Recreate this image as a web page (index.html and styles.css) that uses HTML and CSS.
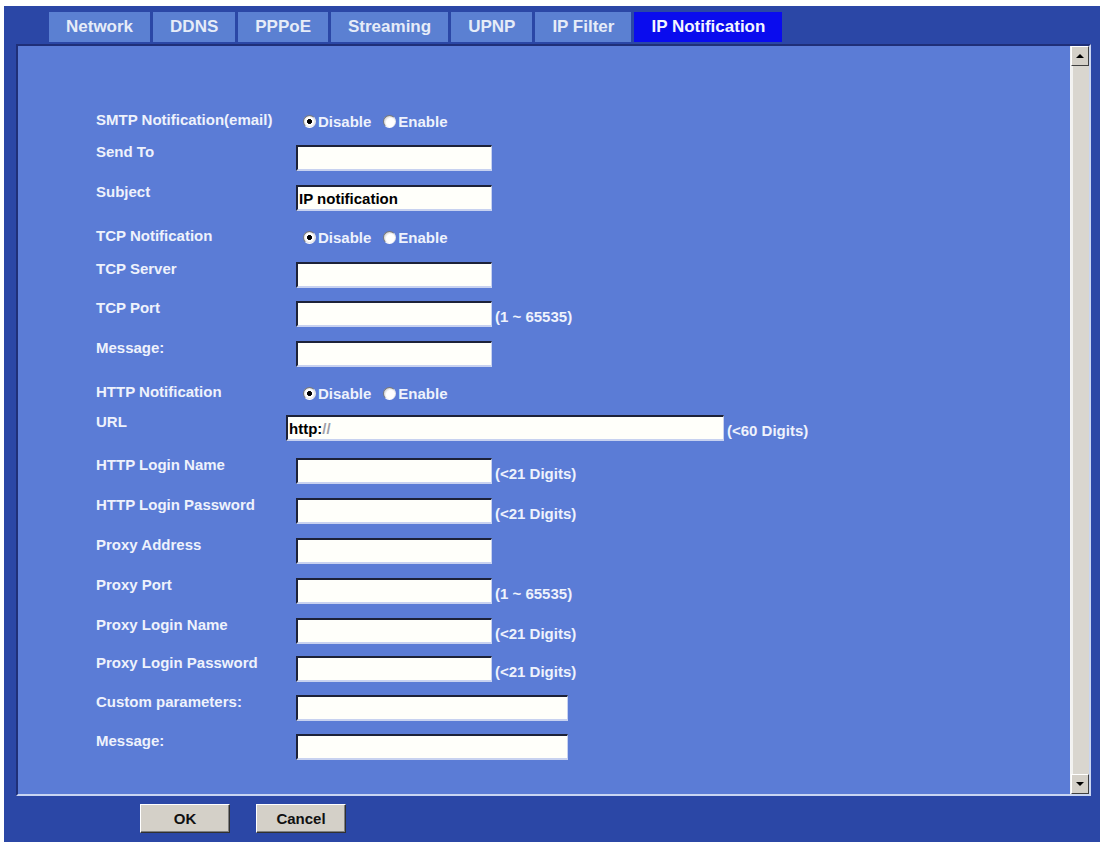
FILE: index.html
```html
<!DOCTYPE html>
<html>
<head>
<meta charset="utf-8">
<title>IP Notification</title>
<link rel="stylesheet" href="styles.css">
</head>
<body>
<div class="frame">
  <div class="tabs">
    <div class="tab">Network</div>
    <div class="tab">DDNS</div>
    <div class="tab">PPPoE</div>
    <div class="tab">Streaming</div>
    <div class="tab">UPNP</div>
    <div class="tab">IP Filter</div>
    <div class="tab active">IP Notification</div>
  </div>
  <div class="panel">
    <div class="content">
      <div class="form">
        <div class="row radio-row">
          <div class="label">SMTP Notification(email)</div>
          <div class="radios"><span class="radio checked"></span><span class="rtext">Disable</span><span class="radio"></span><span class="rtext">Enable</span></div>
        </div>
        <div class="row"><div class="label">Send To</div><input class="field" type="text"></div>
        <div class="row"><div class="label">Subject</div><input class="field" type="text" value="IP notification"></div>
        <div class="row radio-row">
          <div class="label">TCP Notification</div>
          <div class="radios"><span class="radio checked"></span><span class="rtext">Disable</span><span class="radio"></span><span class="rtext">Enable</span></div>
        </div>
        <div class="row"><div class="label">TCP Server</div><input class="field" type="text"></div>
        <div class="row"><div class="label">TCP Port</div><input class="field" type="text"><span class="hint">(1 ~ 65535)</span></div>
        <div class="row"><div class="label">Message:</div><input class="field" type="text"></div>
        <div class="row radio-row">
          <div class="label">HTTP Notification</div>
          <div class="radios"><span class="radio checked"></span><span class="rtext">Disable</span><span class="radio"></span><span class="rtext">Enable</span></div>
        </div>
        <div class="row"><div class="label">URL</div><div class="field url"><span>http:</span><span class="slash">//</span></div><span class="hint">(&lt;60 Digits)</span></div>
        <div class="row"><div class="label">HTTP Login Name</div><input class="field" type="text"><span class="hint">(&lt;21 Digits)</span></div>
        <div class="row"><div class="label">HTTP Login Password</div><input class="field" type="password"><span class="hint">(&lt;21 Digits)</span></div>
        <div class="row"><div class="label">Proxy Address</div><input class="field" type="text"></div>
        <div class="row"><div class="label">Proxy Port</div><input class="field" type="text"><span class="hint">(1 ~ 65535)</span></div>
        <div class="row"><div class="label">Proxy Login Name</div><input class="field" type="text"><span class="hint">(&lt;21 Digits)</span></div>
        <div class="row"><div class="label">Proxy Login Password</div><input class="field" type="password"><span class="hint">(&lt;21 Digits)</span></div>
        <div class="row"><div class="label">Custom parameters:</div><input class="field wide" type="text"></div>
        <div class="row"><div class="label">Message:</div><input class="field wide" type="text"></div>
      </div>
    </div>
    <div class="scrollbar">
      <div class="sbtn"><span class="arrow up"></span></div>
      <div class="track"></div>
      <div class="sbtn"><span class="arrow down"></span></div>
    </div>
  </div>
  <div class="actions">
    <button class="btn">OK</button>
    <button class="btn">Cancel</button>
  </div>
</div>
</body>
</html>
```
FILE: styles.css
```css
html, body {
  margin: 0;
  padding: 0;
  background: #ffffff;
}
body {
  font-family: "Liberation Sans", Arial, sans-serif;
  font-weight: bold;
}
.frame {
  margin: 6px 0 0 4px;
  height: 836px;
  box-sizing: border-box;
  background: #2b47a6;
  padding: 6px 9px 0 12px;
}
.tabs {
  display: flex;
  gap: 3px;
  margin-left: 33px;
  height: 30px;
}
.tab {
  padding: 0 17px;
  line-height: 30px;
  font-size: 17px;
  color: #e6ecf8;
  background: #5b80d2;
  white-space: nowrap;
}
.tab.active {
  background: #0a0cee;
  color: #f4f6ff;
}
.panel {
  margin-top: 2px;
  height: 752px;
  box-sizing: border-box;
  display: flex;
  background: #5b7cd6;
  border-style: solid;
  border-width: 2px 2px 2px 2px;
  border-color: #1f2f78 #c9d5f2 #c9d5f2 #1f2f78;
}
.content {
  flex: 1;
  padding: 62px 0 0 78px;
}
.form {
  display: grid;
  grid-template-rows: 37px 40px 39px 38px 39px 40px 39px 35px 43px 40px 40px 40px 40px 38px 39px 39px 26px;
}
.row {
  display: flex;
  align-items: flex-start;
  height: 26px;
}
.label {
  width: 200px;
  flex: none;
  font-size: 15px;
  line-height: 17px;
  margin-top: -2px;
  color: #eef2fc;
  white-space: nowrap;
}
.radio-row {
  align-items: center;
}
.radio-row .label {
  margin-top: -4px;
}
.radios {
  display: flex;
  align-items: center;
  padding-left: 7px;
  font-size: 15px;
  color: #eef2fc;
}
.radio {
  width: 11px;
  height: 11px;
  border-radius: 50%;
  border: 1px solid;
  border-color: #7a7a7a #e8e8e8 #ffffff #7a7a7a;
  background: radial-gradient(circle at 60% 60%, #ffffff 0 45%, #d8d8d8 70%);
}
.radio.checked {
  background: radial-gradient(circle at 50% 50%, #000 0 2.2px, #ffffff 2.8px 50%, #d8d8d8 75%);
}
.rtext {
  margin-left: 2px;
  margin-right: 12px;
}
.field {
  width: 196px;
  height: 26px;
  box-sizing: border-box;
  margin: 0;
  padding: 0 1px;
  background: #fffffa;
  border-style: solid;
  border-width: 2px 1px 2px 2px;
  border-color: #1d2238 #c8d2f0 #c8d2f0 #1d2238;
  font-family: "Liberation Sans", Arial, sans-serif;
  font-weight: bold;
  font-size: 15px;
  color: #000;
  outline: none;
}
.field.url {
  width: 438px;
  margin-left: -10px;
  display: flex;
  align-items: center;
  line-height: 17px;
}
.field.wide {
  width: 272px;
}
.slash {
  color: #a0a0a8;
}
.hint {
  align-self: flex-end;
  margin: 0 0 2px 3px;
  font-size: 15px;
  line-height: 17px;
  color: #eef2fc;
  white-space: nowrap;
}
.scrollbar {
  width: 18px;
  flex: none;
  display: flex;
  flex-direction: column;
  background: #dcd9d3;
  border-left: 1px solid #f4f4f4;
}
.sbtn {
  height: 20px;
  flex: none;
  box-sizing: border-box;
  background: #d4d0c8;
  border-style: solid;
  border-width: 1px;
  border-color: #ffffff #404040 #404040 #ffffff;
  display: flex;
  align-items: center;
  justify-content: center;
}
.track {
  flex: 1;
  background: linear-gradient(90deg, #f2f2f0 0 2px, #d9d6cf 2px);
}
.arrow {
  width: 0;
  height: 0;
  border-left: 4px solid transparent;
  border-right: 4px solid transparent;
}
.arrow.up {
  border-bottom: 4px solid #000;
}
.arrow.down {
  border-top: 4px solid #000;
}
.actions {
  display: flex;
  gap: 26px;
  margin: 8px 0 0 124px;
}
.btn {
  width: 90px;
  height: 29px;
  margin: 0;
  padding: 0;
  background: #d4d0c8;
  border-style: solid;
  border-width: 1px;
  border-color: #ffffff #303030 #303030 #ffffff;
  box-shadow: inset -1px -1px 0 #808080;
  font-family: "Liberation Sans", Arial, sans-serif;
  font-weight: bold;
  font-size: 15px;
  color: #111;
}
```
